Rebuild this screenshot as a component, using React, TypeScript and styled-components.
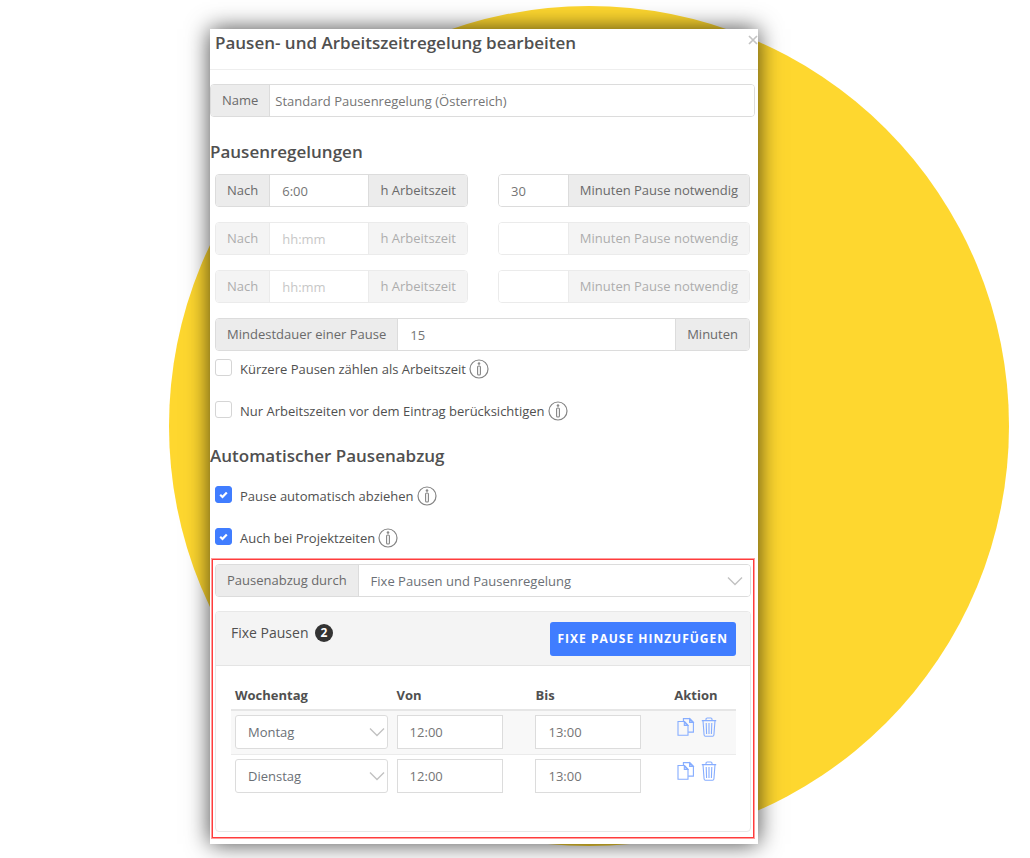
import React, { useId, useState } from "react";
import styled, { createGlobalStyle, css } from "styled-components";

const GlobalStyle = createGlobalStyle`
  *, *::before, *::after { box-sizing: border-box; }
  body {
    margin: 0;
    background: #fff;
    color: #505050;
    font-family: "Open Sans", "Noto Sans", sans-serif;
    font-size: 13px;
    line-height: 20px;
  }
  button, input, select { font: inherit; color: inherit; margin: 0; }
`;

const Page = styled.main`
  position: relative;
  overflow: hidden;
  min-height: 100vh;
  padding: 29px 0 13px;
  display: grid;
  grid-template-columns: 210fr 548fr 272fr;
  align-items: start;
`;

const Disc = styled.div`
  position: absolute;
  top: 6px;
  left: calc(50% - 346px);
  width: 840px;
  height: 840px;
  border-radius: 50%;
  background: #fed72f;
`;

const Dialog = styled.section`
  position: relative;
  grid-column: 2;
  min-width: 0;
  padding-bottom: 6px;
  background: #fff;
  box-shadow: 0 0 22px rgba(0, 0, 0, 0.72);
`;

const Header = styled.header`
  display: flex;
  justify-content: space-between;
  align-items: flex-start;
  height: 41px;
  padding: 2px 0 0 5px;
  border-bottom: 1px solid #eee;
`;

const Title = styled.h1`
  margin: 0;
  font-size: 17px;
  line-height: 24px;
  font-weight: 600;
`;

const CloseButton = styled.button`
  display: flex;
  padding: 2px 0;
  border: 0;
  background: none;
  cursor: pointer;
`;

const NameArea = styled.div`
  padding: 14px 3px 0 0;
`;

const SectionTitle = styled.h2`
  margin: 0;
  padding: 23px 0 10px;
  font-size: 17px;
  line-height: 24px;
  font-weight: 600;
`;

const Stack = styled.div`
  display: flex;
  flex-direction: column;
  gap: 15px;
  padding: 0 8px 0 5px;
`;

const RuleRow = styled.div<{ $off?: boolean }>`
  display: grid;
  grid-template-columns: 253fr 252fr;
  gap: 30px;
  opacity: ${(p) => (p.$off ? 0.55 : 1)};
`;

const Group = styled.div`
  display: flex;
  height: 33px;
  border: 1px solid #dcdcdc;
  border-radius: 4px;
  overflow: hidden;
  background: #fff;
`;

const addon = css`
  flex: none;
  padding: 0 11px;
  line-height: 31px;
  white-space: nowrap;
  color: #6a6a6a;
  background: #ececec;
`;

const Addon = styled.label`
  ${addon}
  border-right: 1px solid #dcdcdc;
`;

const Unit = styled.span`
  ${addon}
  border-left: 1px solid #dcdcdc;
`;

const GroupInput = styled.input<{ $tight?: boolean }>`
  flex: 1;
  min-width: 0;
  padding: 0 ${(p) => (p.$tight ? 5 : 12)}px;
  border: 0;
  outline: 0;
  background: #fff;
  color: #757575;
  &::placeholder { color: #999; opacity: 1; }
`;

const CheckList = styled.div`
  display: flex;
  flex-direction: column;
  gap: 22px;
  padding: 8px 8px 0 5px;
`;

const CheckRow = styled.div`
  display: flex;
  align-items: center;
  height: 20px;
`;

const Checkbox = styled.input`
  appearance: none;
  flex: none;
  width: 17px;
  height: 17px;
  margin: 0 8px 3px 0;
  border: 1px solid #d5d5d5;
  border-radius: 3px;
  background: #fff;
  &:checked {
    border-color: #407dff;
    background: #407dff
      url("data:image/svg+xml,%3Csvg xmlns='http://www.w3.org/2000/svg' viewBox='0 0 15 15'%3E%3Cpath d='M4.2 7.8l2.3 2.2 4.3-4.6' fill='none' stroke='white' stroke-width='2.2'/%3E%3C/svg%3E")
      center / 15px 15px no-repeat;
  }
`;

const InfoButton = styled.button`
  display: flex;
  margin-left: 3px;
  padding: 0;
  border: 0;
  background: none;
  cursor: help;
`;

const Highlight = styled.section`
  margin: 11px 4px 0 2px;
  padding: 4px 2px 5px;
  border: 1px solid #ff3c3c;
  outline: 1px solid rgba(255, 60, 60, 0.5);
`;

const SelectBox = styled.div<{ $boxed?: boolean }>`
  position: relative;
  flex: 1;
  display: flex;
  min-width: 0;
  height: ${(p) => (p.$boxed ? "34px" : "auto")};
  border: ${(p) => (p.$boxed ? "1px solid #dcdcdc" : "0")};
  border-radius: ${(p) => (p.$boxed ? "3px" : "0")};
  background: #fff;
  svg {
    position: absolute;
    top: 50%;
    right: ${(p) => (p.$boxed ? "2px" : "7px")};
    transform: translateY(-50%);
    pointer-events: none;
  }
`;

const Select = styled.select`
  appearance: none;
  width: 100%;
  padding: 0 28px 0 12px;
  border: 0;
  outline: 0;
  background: none;
  color: #6b7076;
`;

const Card = styled.div`
  margin-top: 14px;
  border: 1px solid #e8e8e8;
  border-radius: 4px;
  overflow: hidden;
`;

const CardHeader = styled.div`
  display: flex;
  justify-content: space-between;
  align-items: flex-start;
  padding: 10px 14px 9px 15px;
  border-bottom: 1px solid #e4e4e4;
  background: #f4f4f4;
`;

const CardTitle = styled.h3`
  display: flex;
  align-items: center;
  gap: 6px;
  margin: 0;
  font-size: 14px;
  line-height: 22px;
  font-weight: 400;
`;

const Badge = styled.span`
  padding: 0 6px;
  border-radius: 9px;
  background: #333;
  color: #fff;
  font-size: 12px;
  line-height: 18px;
  font-weight: 700;
`;

const PrimaryButton = styled.button`
  height: 34px;
  padding: 0 8px;
  border: 0;
  border-radius: 3px;
  background: #407dff;
  color: #fff;
  font-size: 12px;
  font-weight: 700;
  letter-spacing: 1px;
  text-transform: uppercase;
  white-space: nowrap;
  cursor: pointer;
`;

const CardBody = styled.div`
  padding: 15px 14px 33px 15px;
`;

const Table = styled.table`
  width: 100%;
  border-collapse: collapse;
  table-layout: fixed;
`;

const Th = styled.th<{ $width: string }>`
  width: ${(p) => p.$width};
  padding: 4px 5px 4px 4px;
  border-bottom: 2px solid #e6e6e6;
  text-align: left;
  font-weight: 700;
`;

const Tr = styled.tr`
  &:nth-child(odd) { background: #f8f8f8; }
  & + & { border-top: 1px solid #ebebeb; }
`;

const Td = styled.td`
  height: 44px;
  padding: 4px 5px 4px 4px;
  vertical-align: top;
`;

const TimeInput = styled.input`
  display: block;
  width: 100%;
  max-width: 106px;
  height: 34px;
  padding: 0 12px;
  border: 1px solid #dcdcdc;
  outline: 0;
  background: #fff;
  color: #757575;
`;

const Actions = styled.div`
  display: flex;
  gap: 6px;
  padding: 2px 0 0 3px;
`;

const IconButton = styled.button`
  display: flex;
  padding: 0;
  border: 0;
  background: none;
  color: #86adff;
  cursor: pointer;
`;

const CloseIcon = () => (
  <svg width="10" height="14" viewBox="0 0 10 14" fill="none" stroke="#c4c4c4" strokeWidth="1.7">
    <path d="M1 3l8 8M9 3l-8 8" />
  </svg>
);

const InfoIcon = () => (
  <svg width="20" height="20" viewBox="0 0 20 20" fill="none" stroke="#858585">
    <circle cx="10" cy="10" r="9" strokeWidth="1.2" />
    <circle cx="10" cy="4.6" r="1" fill="#858585" strokeWidth="0.6" />
    <rect x="8.6" y="7" width="2.8" height="9" rx="1" strokeWidth="1.1" />
  </svg>
);

const Chevron = () => (
  <svg width="16" height="10" viewBox="0 0 16 10" fill="none" stroke="#c2c2c2" strokeWidth="1.4">
    <path d="M1 1.5l7 7 7-7" />
  </svg>
);

const CopyIcon = () => (
  <svg width="18" height="20" viewBox="0 0 18 20" fill="none" stroke="currentColor" strokeWidth="1.1">
    <path d="M1 4.500h6.500l3.500 3.800v10H1z" />
    <path d="M7.300 4.700v3.800h3.600z" fill="currentColor" fillOpacity="0.5" />
    <path d="M6.400 4.300V1.600h6.400l3.600 3.600v9.900H11.200" />
    <path d="M12.600 1.800v3.600h3.600z" fill="currentColor" fillOpacity="0.5" />
  </svg>
);

const TrashIcon = () => (
  <svg width="16" height="20" viewBox="0 0 16 20" fill="none" stroke="currentColor" strokeWidth="1.1">
    <path d="M.8 3.6h14.4M5 3.4V2.2c0-.8.5-1.2 1.2-1.2h3.6c.7 0 1.2.4 1.2 1.2v1.2" />
    <path d="M2 3.8l1.1 14.2c.1.8.5 1.3 1.3 1.3h7.2c.8 0 1.2-.5 1.3-1.3L14 3.8" />
    <path d="M5.2 6l.4 11M8 6v11M10.8 6l-.4 11" />
  </svg>
);

function Rule({ time, minutes, off }: { time: string; minutes: string; off?: boolean }) {
  const id = useId();
  return (
    <RuleRow $off={off}>
      <Group>
        <Addon htmlFor={id}>Nach</Addon>
        <GroupInput id={id} defaultValue={time} placeholder="hh:mm" disabled={off} />
        <Unit>h Arbeitszeit</Unit>
      </Group>
      <Group>
        <GroupInput aria-label="Minuten Pause notwendig" defaultValue={minutes} disabled={off} />
        <Unit>Minuten Pause notwendig</Unit>
      </Group>
    </RuleRow>
  );
}

function Check({ label, on }: { label: string; on?: boolean }) {
  const id = useId();
  return (
    <CheckRow>
      <Checkbox type="checkbox" id={id} defaultChecked={on} />
      <label htmlFor={id}>{label}</label>
      <InfoButton type="button" aria-label="Info">
        <InfoIcon />
      </InfoButton>
    </CheckRow>
  );
}

const days = ["Montag", "Dienstag", "Mittwoch", "Donnerstag", "Freitag", "Samstag", "Sonntag"];

export default function App() {
  const [breaks] = useState([
    { day: "Montag", from: "12:00", to: "13:00" },
    { day: "Dienstag", from: "12:00", to: "13:00" },
  ]);

  return (
    <Page>
      <GlobalStyle />
      <Disc />
      <Dialog role="dialog" aria-labelledby="dialog-title">
        <Header>
          <Title id="dialog-title">Pausen- und Arbeitszeitregelung bearbeiten</Title>
          <CloseButton type="button" aria-label="Schließen">
            <CloseIcon />
          </CloseButton>
        </Header>

        <NameArea>
          <Group>
            <Addon htmlFor="name">Name</Addon>
            <GroupInput id="name" $tight defaultValue="Standard Pausenregelung (Österreich)" />
          </Group>
        </NameArea>

        <SectionTitle>Pausenregelungen</SectionTitle>
        <Stack>
          <Rule time="6:00" minutes="30" />
          <Rule time="" minutes="" off />
          <Rule time="" minutes="" off />
          <Group>
            <Addon htmlFor="min">Mindestdauer einer Pause</Addon>
            <GroupInput id="min" defaultValue="15" />
            <Unit>Minuten</Unit>
          </Group>
        </Stack>
        <CheckList>
          <Check label="Kürzere Pausen zählen als Arbeitszeit" />
          <Check label="Nur Arbeitszeiten vor dem Eintrag berücksichtigen" />
        </CheckList>

        <SectionTitle>Automatischer Pausenabzug</SectionTitle>
        <CheckList>
          <Check label="Pause automatisch abziehen" on />
          <Check label="Auch bei Projektzeiten" on />
        </CheckList>

        <Highlight>
          <Group>
            <Addon htmlFor="mode">Pausenabzug durch</Addon>
            <SelectBox>
              <Select id="mode">
                <option>Fixe Pausen und Pausenregelung</option>
              </Select>
              <Chevron />
            </SelectBox>
          </Group>
          <Card>
            <CardHeader>
              <CardTitle>
                Fixe Pausen <Badge>{breaks.length}</Badge>
              </CardTitle>
              <PrimaryButton type="button">Fixe Pause hinzufügen</PrimaryButton>
            </CardHeader>
            <CardBody>
              <Table>
                <thead>
                  <tr>
                    <Th $width="32%">Wochentag</Th>
                    <Th $width="27.5%">Von</Th>
                    <Th $width="27.5%">Bis</Th>
                    <Th $width="13%">Aktion</Th>
                  </tr>
                </thead>
                <tbody>
                  {breaks.map((b) => (
                    <Tr key={b.day}>
                      <Td>
                        <SelectBox $boxed>
                          <Select aria-label="Wochentag" defaultValue={b.day}>
                            {days.map((d) => (
                              <option key={d}>{d}</option>
                            ))}
                          </Select>
                          <Chevron />
                        </SelectBox>
                      </Td>
                      <Td>
                        <TimeInput aria-label="Von" defaultValue={b.from} />
                      </Td>
                      <Td>
                        <TimeInput aria-label="Bis" defaultValue={b.to} />
                      </Td>
                      <Td>
                        <Actions>
                          <IconButton type="button" aria-label="Kopieren">
                            <CopyIcon />
                          </IconButton>
                          <IconButton type="button" aria-label="Löschen">
                            <TrashIcon />
                          </IconButton>
                        </Actions>
                      </Td>
                    </Tr>
                  ))}
                </tbody>
              </Table>
            </CardBody>
          </Card>
        </Highlight>
      </Dialog>
    </Page>
  );
}
